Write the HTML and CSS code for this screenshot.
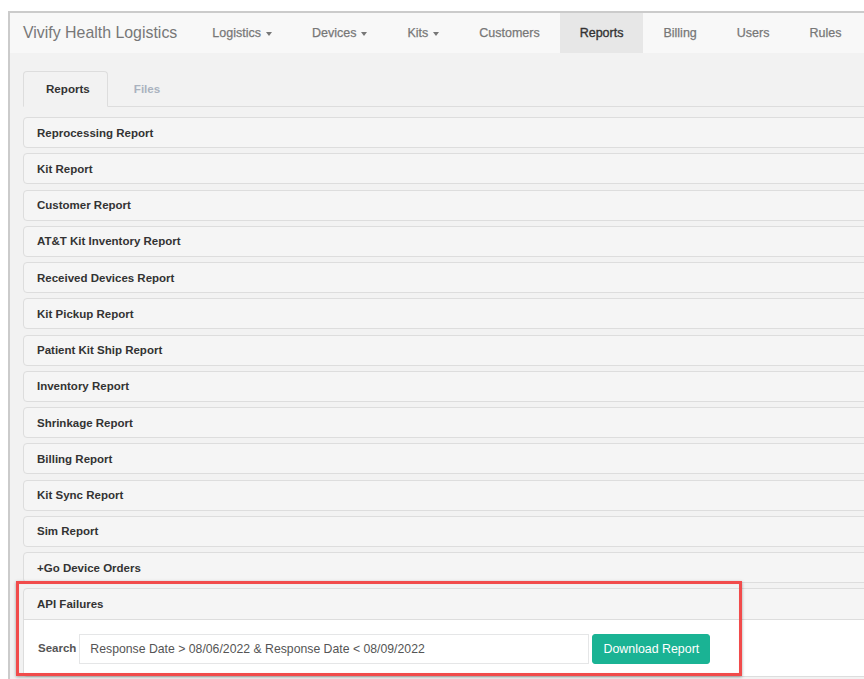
FILE: index.html
```html
<!DOCTYPE html>
<html lang="en">
<head>
<meta charset="utf-8">
<title>Vivify Health Logistics - Reports</title>
<link rel="stylesheet" href="styles.css">
</head>
<body>
<div class="window">
  <nav class="navbar">
    <a class="brand" href="#">Vivify Health Logistics</a>
    <ul class="nav">
      <li><a href="#">Logistics<span class="caret"></span></a></li>
      <li><a href="#">Devices<span class="caret"></span></a></li>
      <li><a href="#">Kits<span class="caret"></span></a></li>
      <li><a href="#">Customers</a></li>
      <li class="active"><a href="#">Reports</a></li>
      <li><a href="#">Billing</a></li>
      <li><a href="#">Users</a></li>
      <li><a href="#">Rules</a></li>
    </ul>
  </nav>

  <main class="content">
    <ul class="tabs">
      <li class="tab active">Reports</li>
      <li class="tab">Files</li>
    </ul>

    <div class="panels">
      <div class="panel"><div class="panel-heading">Reprocessing Report</div></div>
      <div class="panel"><div class="panel-heading">Kit Report</div></div>
      <div class="panel"><div class="panel-heading">Customer Report</div></div>
      <div class="panel"><div class="panel-heading">AT&amp;T Kit Inventory Report</div></div>
      <div class="panel"><div class="panel-heading">Received Devices Report</div></div>
      <div class="panel"><div class="panel-heading">Kit Pickup Report</div></div>
      <div class="panel"><div class="panel-heading">Patient Kit Ship Report</div></div>
      <div class="panel"><div class="panel-heading">Inventory Report</div></div>
      <div class="panel"><div class="panel-heading">Shrinkage Report</div></div>
      <div class="panel"><div class="panel-heading">Billing Report</div></div>
      <div class="panel"><div class="panel-heading">Kit Sync Report</div></div>
      <div class="panel"><div class="panel-heading">Sim Report</div></div>
      <div class="panel"><div class="panel-heading">+Go Device Orders</div></div>
      <div class="panel open">
        <div class="panel-heading">API Failures</div>
        <div class="panel-body">
          <label class="search-label" for="q">Search</label>
          <input id="q" class="search-input" type="text" value="Response Date &gt; 08/06/2022 &amp; Response Date &lt; 08/09/2022">
          <button class="btn-primary" type="button">Download Report</button>
        </div>
      </div>
    </div>
  </main>
</div>
<div class="highlight"></div>
</body>
</html>
```

FILE: styles.css
```css
html, body {
  margin: 0;
  padding: 0;
  background: #ffffff;
  overflow: hidden;
  width: 864px;
  height: 679px;
}

body {
  font-family: "Liberation Sans", Arial, sans-serif;
  font-size: 12.4px;
  color: #333;
  position: relative;
}

.window {
  margin: 11px 0 0 8px;
  width: 920px;
  height: 700px;
  border-top: 2px solid #cbcbcb;
  border-left: 2px solid #cbcbcb;
  background: #f2f2f2;
}

/* top navigation */
.navbar {
  display: flex;
  align-items: center;
  height: 40px;
  background: #f8f8f8;
}

.brand {
  padding: 0 15px 0 13px;
  font-size: 15.9px;
  color: #777;
  text-decoration: none;
  line-height: 40px;
}

.nav {
  display: flex;
  list-style: none;
  margin: 0;
  padding: 0;
  height: 40px;
}

.nav li a {
  display: flex;
  align-items: center;
  height: 40px;
  padding: 0 20px;
  color: #777;
  text-decoration: none;
  font-size: 12.5px;
  -webkit-text-stroke: 0.25px #777;
}

.nav li.active a {
  background: #e7e7e7;
  color: #333;
  padding: 0 20px;
  -webkit-text-stroke: 0.35px #333;
}

.caret {
  display: inline-block;
  width: 0;
  height: 0;
  margin-left: 5px;
  margin-top: 2px;
  border-top: 4px solid #777;
  border-left: 3.5px solid transparent;
  border-right: 3.5px solid transparent;
}

/* page body */
.content {
  padding: 18px 0 0 13px;
}

.tabs {
  display: flex;
  list-style: none;
  margin: 0 0 10px 0;
  padding: 0;
  border-bottom: 1px solid #ddd;
}

.tab {
  height: 34px;
  line-height: 34px;
  padding: 0 23px;
  margin-right: 2px;
  font-size: 11.6px;
  font-weight: bold;
  color: #aab2bf;
  border: 1px solid transparent;
  border-radius: 4px 4px 0 0;
  margin-bottom: -1px;
}

.tab.active {
  color: #333;
  border-color: #ddd;
  border-bottom-color: #f2f2f2;
  background: #f2f2f2;
  padding: 0 17px 0 22px;
}

.panels {
  display: flex;
  flex-direction: column;
}

.panel {
  border: 1px solid #ddd;
  border-radius: 4px;
  background: #f5f5f5;
  margin-bottom: 5.25px;
}

.panel-heading {
  display: flex;
  align-items: center;
  height: 29px;
  padding: 0 13px;
  font-size: 11.5px;
  font-weight: bold;
  color: #333;
}

.panel.open .panel-heading {
  height: 30px;
  border-bottom: 1px solid #ddd;
}

.panel-body {
  display: flex;
  align-items: center;
  background: #fff;
  padding: 14px 14px 12px;
  border-radius: 0 0 4px 4px;
}

.search-label {
  font-size: 11.5px;
  font-weight: bold;
  color: #555;
  margin-right: 3px;
  margin-top: -3px;
}

.search-input {
  box-sizing: border-box;
  width: 510px;
  height: 30px;
  padding: 0 10px;
  border: 1px solid #e5e6e7;
  background: #fff;
  font-family: "Liberation Sans", Arial, sans-serif;
  font-size: 12.25px;
  color: #555;
  outline: none;
}

.btn-primary {
  margin-left: 3px;
  height: 30px;
  width: 118px;
  padding: 0;
  border: 1px solid #1ab394;
  border-radius: 3px;
  background: #1ab394;
  color: #fff;
  font-family: "Liberation Sans", Arial, sans-serif;
  font-size: 12.4px;
}

/* call-out frame around the API panel */
.highlight {
  position: absolute;
  left: 16px;
  top: 581px;
  width: 720px;
  height: 89px;
  border: 3px solid #f14b4b;
  box-shadow: 0 1px 3px rgba(0, 0, 0, 0.35), inset 0 0 1px rgba(0, 0, 0, 0.15);
  pointer-events: none;
}
```
